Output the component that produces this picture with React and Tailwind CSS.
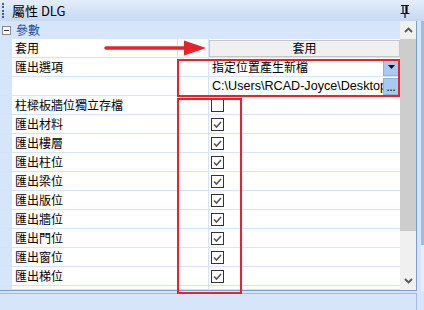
import React from 'react';

const rows = [
  { label: '柱樑板牆位獨立存檔', checked: false },
  { label: '匯出材料', checked: true },
  { label: '匯出樓層', checked: true },
  { label: '匯出柱位', checked: true },
  { label: '匯出梁位', checked: true },
  { label: '匯出版位', checked: true },
  { label: '匯出牆位', checked: true },
  { label: '匯出門位', checked: true },
  { label: '匯出窗位', checked: true },
  { label: '匯出梯位', checked: true },
];

function Check({ checked }) {
  return (
    <div className="w-[13px] h-[13px] border border-[#333] bg-white flex items-center justify-center">
      {checked && (
        <svg width="11" height="11" viewBox="0 0 11 11">
          <path d="M2 5.5 L4.5 8 L9 3" fill="none" stroke="#555" strokeWidth="1.6" />
        </svg>
      )}
    </div>
  );
}

function Row({ label, children, h = 'h-[19px]' }) {
  return (
    <div className={`flex ${h} border-b border-[#d5e3f6]`}>
      <div className="w-[12px] bg-[#d6e5fa]" />
      <div className="w-[166px] bg-white border-r border-[#d5e3f6] pl-[3px] flex items-center whitespace-nowrap">
        {label}
      </div>
      <div className="w-[31px] bg-white border-r border-[#d5e3f6]" />
      <div className="flex-1 bg-white flex items-center min-w-0">{children}</div>
    </div>
  );
}

function SmallBtn({ children }) {
  return (
    <div className="w-[16px] h-[17px] bg-[#a9c9f2] border border-[#8fb3e4] flex items-center justify-center shrink-0 mr-[1px]">
      {children}
    </div>
  );
}

export default function App() {
  return (
    <div
      className="w-[424px] h-[310px] bg-[#d6e5fa] flex flex-col relative overflow-hidden text-[12px] text-black"
      style={{ fontFamily: '"Noto Sans CJK TC", "Liberation Sans", sans-serif' }}
    >
      {/* title bar */}
      <div className="h-[21px] flex items-center bg-gradient-to-b from-[#e4edfb] to-[#c6d8f2] shrink-0">
        <div className="w-[2px] h-[15px] ml-[2px] flex flex-col justify-between">
          {[0, 1, 2, 3, 4].map(i => (
            <div key={i} className="w-[2px] h-[2px] bg-[#3c5f9c]" />
          ))}
        </div>
        <div className="ml-[8px] text-[13px] leading-none">屬性 DLG</div>
        <div className="flex-1" />
        <svg width="10" height="14" viewBox="0 0 10 14" className="mr-[14px]">
          <path d="M1 1.5 H9 M3 1.5 V9 M7 1.5 V9 M6 2 V9 M0.5 9.5 H9.5 M5 9.5 V14" stroke="#111" strokeWidth="1.2" fill="none" />
        </svg>
      </div>

      {/* grid */}
      <div className="flex h-[270px] shrink-0">
        <div className="w-[417px] flex border-r border-b border-[#7b9fd4]">
          <div className="w-[400px] flex flex-col overflow-hidden">
            <div className="h-[18px] flex items-center bg-[#d6e5fa] shrink-0">
              <div className="w-[9px] h-[9px] ml-[2px] border border-[#8a8a8a] bg-white flex items-center justify-center">
                <div className="w-[5px] h-[1px] bg-[#333]" />
              </div>
              <div className="ml-[5px] text-[#23449a]">參數</div>
            </div>
            <Row label="套用">
              <div className="w-full h-[17px] bg-[#f0f0f0] border border-[#c6c6c6] flex items-center justify-center">
                套用
              </div>
            </Row>
            <Row label="匯出選項">
              <div className="flex-1 pl-[3px] whitespace-nowrap">指定位置產生新檔</div>
              <SmallBtn>
                <svg width="7" height="4" viewBox="0 0 7 4">
                  <path d="M0 0 H7 L3.5 4 Z" fill="#111" />
                </svg>
              </SmallBtn>
            </Row>
            <Row label="">
              <div className="flex-1 min-w-0 pl-[3px] whitespace-nowrap overflow-hidden text-[12.6px]" style={{ fontFamily: '"Liberation Sans", "Noto Sans CJK TC", sans-serif' }}>
                C:\Users\RCAD-Joyce\Desktop
              </div>
              <SmallBtn>
                <span className="text-[11px] leading-none">...</span>
              </SmallBtn>
            </Row>
            {rows.map(r => (
              <Row key={r.label} label={r.label}>
                <div className="ml-[2px]">
                  <Check checked={r.checked} />
                </div>
              </Row>
            ))}
            <Row label="" />
          </div>

          {/* scrollbar */}
          <div className="w-[16px] bg-[#f0f0f0] flex flex-col items-center">
            <div className="h-[18px] flex items-center justify-center">
              <svg width="9" height="6" viewBox="0 0 9 6">
                <path d="M1 5 L4.5 1.5 L8 5" stroke="#555" strokeWidth="1.8" fill="none" />
              </svg>
            </div>
            <div className="w-[16px] h-[192px] bg-[#cdcdcd]" />
            <div className="flex-1" />
            <div className="h-[18px] flex items-center justify-center">
              <svg width="9" height="6" viewBox="0 0 9 6">
                <path d="M1 1 L4.5 4.5 L8 1" stroke="#555" strokeWidth="1.8" fill="none" />
              </svg>
            </div>
          </div>
        </div>
        <div className="flex-1 flex justify-end">
          <div className="w-[3px] flex flex-col">
            <div className="h-[224px] bg-[#9bbbea]" />
            <div className="flex-1 bg-[#e6eefa]" />
          </div>
        </div>
      </div>

      {/* bottom panel */}
      <div className="flex-1 flex">
        <div className="w-[417px] mt-[2px] border-t border-r border-[#9fbce6]" />
      </div>

      {/* annotations */}
      <svg className="absolute left-0 top-0" width="424" height="310" viewBox="0 0 424 310">
        <path d="M106 48 H188" stroke="#e8222b" strokeWidth="3.5" strokeLinecap="round" />
        <path d="M184 40.5 L206 48 L184 55.5 Z" fill="#e8222b" />
      </svg>
      <div className="absolute left-[177px] top-[59px] w-[223px] h-[38px] border-2 border-[#e8222b]" />
      <div className="absolute left-[177px] top-[98px] w-[65px] h-[196px] border-2 border-[#e8222b]" />
    </div>
  );
}
